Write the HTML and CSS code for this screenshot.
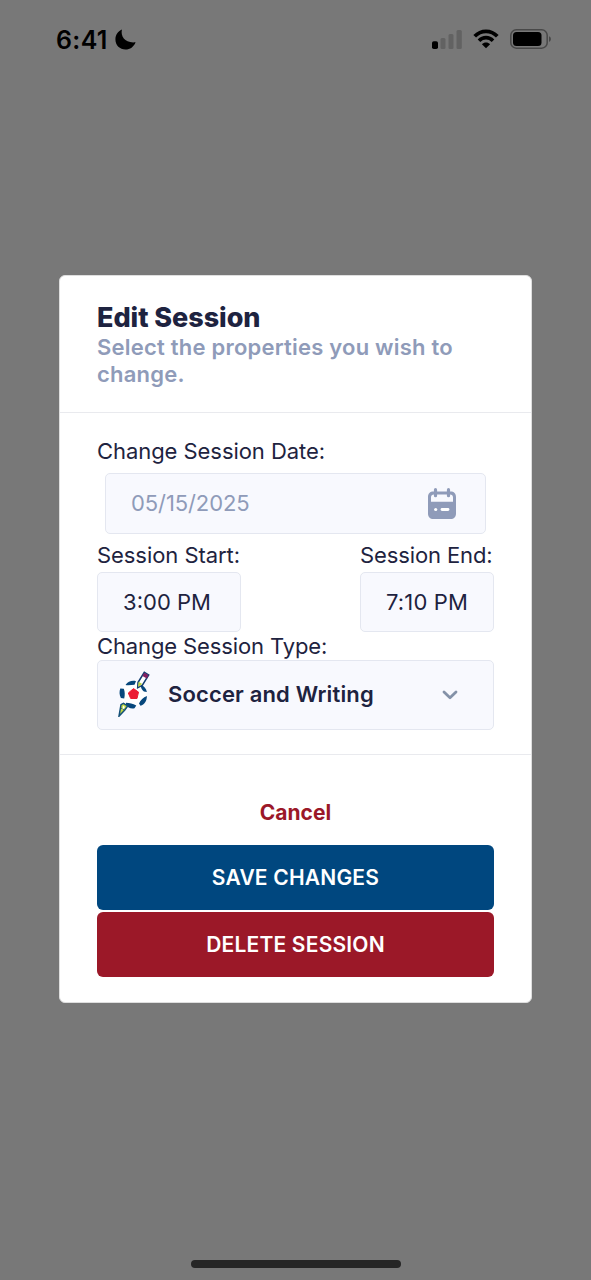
FILE: index.html
```html
<!DOCTYPE html>
<html lang="en">
<head>
<meta charset="utf-8">
<title>Edit Session</title>
<link rel="stylesheet" href="styles.css">
</head>
<body>
<div class="screen">
  <header class="status-bar">
    <div class="status-left">
      <span class="clock">6:41</span>
      <svg class="moon" width="21" height="21" viewBox="0 0 20 20"><path d="M6.600.5C5 7.300 10 13.800 19.600 12.600 17.900 17 14.300 19.600 10 19.600 4.600 19.600.4 15.300.4 10 .4 5.700 2.700 2.100 6.600.5Z"/></svg>
    </div>
    <div class="status-right">
      <svg class="signal" width="31" height="20" viewBox="0 0 31 20">
        <rect x="0" y="11.300" width="6" height="7.700" rx="1.800" fill="#000"/>
        <g fill="#626262"><rect x="8.500" y="8" width="5" height="11" rx="1.500"/><rect x="16.500" y="4" width="5" height="15" rx="1.500"/><rect x="24.500" y="0" width="5.300" height="19" rx="1.500"/></g>
      </svg>
      <svg class="wifi" width="26" height="20" viewBox="0 0 26 20">
        <path d="M1.700 7.300C8 .6 18 .6 24.300 7.300M6 11.700c4-4 10-4 14 0" fill="none" stroke="#000" stroke-width="3.700"/>
        <path d="M13 19.200 8.900 15.200c2.200-2.200 6-2.200 8.200 0Z"/>
      </svg>
      <svg class="battery" width="42" height="20" viewBox="0 0 42 20">
        <rect x=".8" y=".8" width="36.400" height="18.400" rx="5.500" fill="none" stroke="#484848" stroke-width="1.500"/>
        <rect x="3" y="3" width="28.500" height="14" rx="3.500"/>
        <path d="M39 7.200c2.500.8 2.500 4.800 0 5.600Z" fill="#484848"/>
      </svg>
    </div>
  </header>

  <main class="modal">
    <section class="modal-header">
      <h1 class="title"><span>Edit Session</span></h1>
      <p class="subtitle">Select the properties you wish to change.</p>
    </section>

    <section class="modal-body">
      <div class="label label-date">Change Session Date:</div>
      <div class="field date-field">
        <span class="date-value">05/15/2025</span>
        <svg width="28" height="32" viewBox="0 0 28 32">
          <path fill="#8f9bb9" fill-rule="evenodd" d="M5.500 3.500h17C26 3.500 28 5.500 28 9v16.500c0 3.500-2 5.500-5.500 5.500h-17C2 31 0 29 0 25.500V9c0-3.500 2-5.500 5.500-5.500ZM3 9.500v4.300h22V9.500c0-2-1.100-3.100-3-3.100H6c-1.900 0-3 1.100-3 3.100Z"/>
          <path d="M7.500 1.700v6M20.500 1.700v6" fill="none" stroke="#8f9bb9" stroke-width="3.200" stroke-linecap="round"/>
          <path d="M14 21.500h6" stroke="#fff" stroke-width="2.800" stroke-linecap="round"/><circle cx="7.700" cy="21.500" r="1.600" fill="#fff"/>
        </svg>
      </div>
      <div class="times">
        <div class="time-col">
          <div class="label label-start">Session Start:</div>
          <div class="field time-field start"><span>3:00 PM</span></div>
        </div>
        <div class="time-col end-col">
          <div class="label label-end">Session End:</div>
          <div class="field time-field end"><span>7:10 PM</span></div>
        </div>
      </div>
      <div class="label label-type">Change Session Type:</div>
      <div class="field select">
        <svg class="ball" width="32" height="46" viewBox="0 0 32 46">
          <circle cx="15.500" cy="23" r="13" fill="#fff"/>
          <g fill="#07477c">
            <path d="M7.500 14c2.500-3.500 6.500-4.800 10.500-3.800l-1.500 3.600c-3 .1-6 .9-9 .2ZM2.300 17.500l3.500.2c1.200 3 1.200 6.500.4 9.800l-3.300-.6c-1.700-3-1.700-6.400-.6-9.400ZM22.500 13.500c3.500 1.300 5.700 4 6.400 7.500l-3-.4c-1.900-1.500-3.200-3.600-3.400-7.100ZM28.900 25c0 5-2.400 8.500-6.400 9.800l-1.500-2.400c1.600-3.200 4.200-5.900 7.900-7.400ZM8 31.800c3.500 0 6.800.9 10.300 2.700l-1.800 2.700c-3.700.8-6.800-.6-8.500-3.400Z"/>
          </g>
          <path fill="#eb1c34" stroke="#eb1c34" stroke-linejoin="round" d="m15.500 17.600 5 3.500-1.500 6.400h-6.300L10.300 22Z"/>
          <path d="m20 11.500 6.300-10.200 4.400 2.600-6.300 10.300-4.700 2.600Z" fill="#fff" stroke="#123d70" stroke-width="1.500"/>
          <path fill="#812062" d="m25.300 3.200 1.200-1.500 3.900 2.300-1.500 3.600-4.500-2.600Z"/>
          <path fill="#bad33f" d="m20.600 10.700 3.700 2.400-4.200 2.800Z"/>
          <path d="m3 33.700 2.500-1.300 4.200 2.500L6.800 39 1 45.200Z" fill="#bfd73e" stroke="#145078" stroke-width="1.500"/>
          <path d="m2.700 37 3.800 2" stroke="#145078" stroke-width=".8"/>
          <path d="m5 34.500 2 1.500-2.500 3Z" fill="#fff"/>
        </svg>
        <span class="select-value">Soccer and Writing</span>
        <svg class="chevron" width="18" height="12" viewBox="0 0 18 12"><path d="m3 3 6 5.700L15 3" fill="none" stroke="#8492a8" stroke-width="2.800" stroke-linecap="round" stroke-linejoin="round"/></svg>
      </div>
    </section>

    <section class="modal-footer">
      <button class="cancel"><span>Cancel</span></button>
      <button class="button save"><span>SAVE CHANGES</span></button>
      <button class="button delete"><span>DELETE SESSION</span></button>
    </section>
  </main>
  <div class="home-indicator"></div>
</div>
</body>
</html>
```
FILE: styles.css
```css
* { box-sizing: border-box; }
body {
  margin: 0;
  background: #787878;
  color: #1e2340;
  font-family: Inter, "Liberation Sans", sans-serif;
  font-size: 22px;
  line-height: 27px;
}
h1, p { margin: 0; }
svg { display: block; flex: none; }
button { padding: 0; border: 0; background: none; font: inherit; }
.screen {
  display: flex;
  flex-direction: column;
  height: 1280px;
  overflow: hidden;
}
.status-bar {
  display: flex;
  justify-content: space-between;
  height: 275px;
  padding: 25px 39px 0 56px;
  color: #000;
}
.status-left { display: flex; gap: 7px; height: 30px; }
.clock { width: 52px; font-size: 25px; line-height: 31px; font-weight: 600; letter-spacing: .35px; white-space: nowrap; }
.moon { margin-top: 4px; }
.status-right { display: flex; height: 30px; }
.signal { margin-top: 5px; }
.wifi { margin: 4px 0 0 10px; }
.battery { margin: 4px 0 0 11px; }

.modal {
  width: 473px;
  height: 728px;
  margin-left: 59px;
  background: #fff;
  border: 1px solid #dedede;
  border-radius: 6px;
}
.modal-header {
  height: 137px;
  padding: 25px 37px 0;
  border-bottom: 1px solid #e9eaee;
}
.title { font-size: 27px; line-height: 33px; font-weight: 800; letter-spacing: -.05px; }
.subtitle { color: #8f9bb9; font-weight: 600; letter-spacing: .22px; }

.modal-body {
  height: 342px;
  padding: 25px 37px 0;
  border-bottom: 1px solid #e9eaee;
}
.label { white-space: nowrap; letter-spacing: -.06px; }
.label-end, .label-type { letter-spacing: -.12px; }
.field {
  display: flex;
  align-items: center;
  background: #f8f9fe;
  border: 1px solid #e4e7f0;
  border-radius: 5px;
}
.date-field {
  height: 61px;
  margin: 8px 8px 8px;
  padding: 0 29px 0 25px;
  justify-content: space-between;
  color: #8f9bb9;
}
.date-value { letter-spacing: -.1px; }
.times { display: flex; justify-content: space-between; }
.end-col { width: 134px; }
.time-field { height: 60px; margin-top: 3px; justify-content: center; white-space: nowrap; }
.start { width: 144px; padding-right: 4px; }
.end { letter-spacing: .15px; }
.label-type { margin-top: 1px; }
.select { height: 70px; padding: 0 34px 2px 20px; }
.select-value { margin-left: 18px; font-weight: 600; letter-spacing: .15px; white-space: nowrap; }
.chevron { margin: 2px 0 0 auto; }

.modal-footer { display: flex; flex-direction: column; padding: 35px 37px 0; }
.cancel { height: 45px; color: #9b1828; font-weight: 700; font-size: 21px; }
.button {
  height: 65px;
  margin-top: 10px;
  border-radius: 6px;
  color: #fff;
  font-size: 21px;
  font-weight: 600;
  letter-spacing: .2px;
}
.save { background: #00477f; }
.delete { margin-top: 2px; background: #9b1828; }
.home-indicator {
  width: 210px;
  height: 8px;
  margin: 257px 0 0 191px;
  border-radius: 4px;
  background: #262626;
}
```
